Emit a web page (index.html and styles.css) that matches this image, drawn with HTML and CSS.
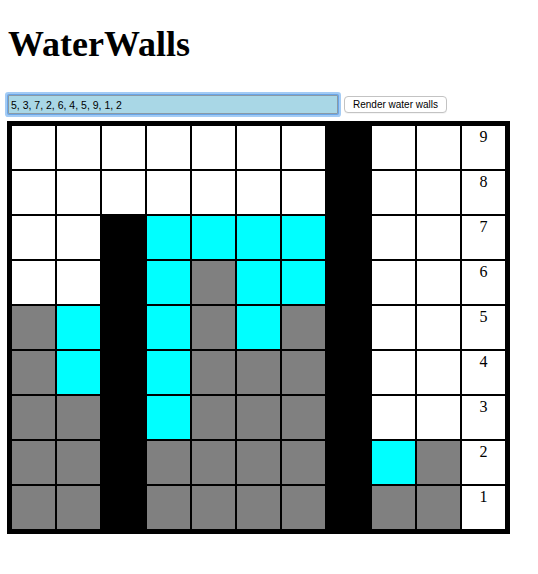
FILE: index.html
```html
<!DOCTYPE html>
<html>
<head>
<meta charset="utf-8">
<title>WaterWalls</title>
<link rel="stylesheet" href="styles.css">
</head>
<body>
<h1 class="title">WaterWalls</h1>
<div class="controls">
  <input class="heights" type="text" value="5, 3, 7, 2, 6, 4, 5, 9, 1, 2">
  <button class="render">Render water walls</button>
</div>
<table class="grid">
  <tr><td class="e"></td><td class="e"></td><td class="e"></td><td class="e"></td><td class="e"></td><td class="e"></td><td class="e"></td><td class="b"></td><td class="e"></td><td class="e"></td><td class="n">9</td></tr>
  <tr><td class="e"></td><td class="e"></td><td class="e"></td><td class="e"></td><td class="e"></td><td class="e"></td><td class="e"></td><td class="b"></td><td class="e"></td><td class="e"></td><td class="n">8</td></tr>
  <tr><td class="e"></td><td class="e"></td><td class="b"></td><td class="c"></td><td class="c"></td><td class="c"></td><td class="c"></td><td class="b"></td><td class="e"></td><td class="e"></td><td class="n">7</td></tr>
  <tr><td class="e"></td><td class="e"></td><td class="b"></td><td class="c"></td><td class="w"></td><td class="c"></td><td class="c"></td><td class="b"></td><td class="e"></td><td class="e"></td><td class="n">6</td></tr>
  <tr><td class="w"></td><td class="c"></td><td class="b"></td><td class="c"></td><td class="w"></td><td class="c"></td><td class="w"></td><td class="b"></td><td class="e"></td><td class="e"></td><td class="n">5</td></tr>
  <tr><td class="w"></td><td class="c"></td><td class="b"></td><td class="c"></td><td class="w"></td><td class="w"></td><td class="w"></td><td class="b"></td><td class="e"></td><td class="e"></td><td class="n">4</td></tr>
  <tr><td class="w"></td><td class="w"></td><td class="b"></td><td class="c"></td><td class="w"></td><td class="w"></td><td class="w"></td><td class="b"></td><td class="e"></td><td class="e"></td><td class="n">3</td></tr>
  <tr><td class="w"></td><td class="w"></td><td class="b"></td><td class="w"></td><td class="w"></td><td class="w"></td><td class="w"></td><td class="b"></td><td class="c"></td><td class="w"></td><td class="n">2</td></tr>
  <tr><td class="w"></td><td class="w"></td><td class="b"></td><td class="w"></td><td class="w"></td><td class="w"></td><td class="w"></td><td class="b"></td><td class="w"></td><td class="w"></td><td class="n">1</td></tr>
</table>
</body>
</html>
```
FILE: styles.css
```css
html, body {
  background: #ffffff;
}
body {
  margin: 0;
  padding: 24px 7px 0;
  font-family: "Liberation Serif", "Times New Roman", serif;
  color: #000;
}
.title {
  margin: 0 0 0 1px;
  font-family: "Liberation Serif", "Times New Roman", serif;
  font-weight: 700;
  font-size: 36px;
  line-height: 40px;
}
.controls {
  margin-top: 31px;
  display: flex;
  align-items: center;
  gap: 6px;
  height: 19px;
}
.heights {
  box-sizing: border-box;
  margin: 0 0 0 1px;
  width: 330px;
  height: 19px;
  padding: 0 2px;
  border: 1px solid #8a9aa6;
  background: #a9d7e6;
  font-family: "Liberation Sans", Arial, sans-serif;
  font-size: 10.5px;
  color: #000;
  outline: none;
  box-shadow: 0 0 0 1px #6aa6e8, 0 0 0 3px #a3cbf4;
  border-radius: 1px;
}
.render {
  box-sizing: border-box;
  margin: 0;
  height: 17px;
  width: 103px;
  padding: 0;
  border: 1px solid #c3c3c3;
  border-radius: 4px;
  background: #ffffff;
  font-family: "Liberation Sans", Arial, sans-serif;
  font-size: 10px;
  color: #000;
  box-shadow: 0 1px 0 rgba(0,0,0,0.04);
}
.grid {
  margin-top: 7px;
  border: 3px solid #000;
  border-collapse: separate;
  border-spacing: 2px;
  background: #000;
}
.grid td {
  width: 43px;
  height: 43px;
  padding: 0;
  box-sizing: border-box;
}
.e { background: #ffffff; }
.w { background: #808080; }
.b { background: #000000; }
.c { background: #00ffff; }
.grid td.n {
  background: #ffffff;
  vertical-align: top;
  text-align: center;
  font-family: "Liberation Serif", "Times New Roman", serif;
  font-size: 16px;
  line-height: 18px;
  padding-top: 2px;
}
```
